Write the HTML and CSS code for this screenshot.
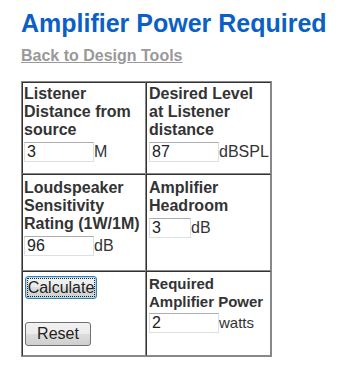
FILE: index.html
```html
<!DOCTYPE html>
<html lang="en">
<head>
  <meta charset="UTF-8" />
  <title>Amplifier Power Required</title>
  <meta name="viewport" content="width=device-width, initial-scale=1.0" />
  <link rel="stylesheet" href="styles.css">
</head>
<body>

<div class="page">
  <h1 class="title">Amplifier Power Required</h1>
  <p class="back"><a href="#">Back to Design Tools</a></p>

  <form id="ampForm">
    <table class="calc">
      <tr class="row-first">
        <td class="left">
          <span class="label">Listener Distance from source</span><br>
          <input type="text" name="distance" value="3" class="field">M
        </td>
        <td class="right">
          <span class="label">Desired Level at Listener distance</span><br>
          <input type="text" name="level" value="87" class="field">dBSPL
        </td>
      </tr>
      <tr class="row-second">
        <td class="left">
          <span class="label">Loudspeaker Sensitivity Rating (1W/1M)</span><br>
          <input type="text" name="sensitivity" value="96" class="field">dB
        </td>
        <td class="right">
          <span class="label">Amplifier Headroom</span><br>
          <input type="text" name="headroom" value="3" class="field short">dB
        </td>
      </tr>
      <tr class="row-third">
        <td class="left">
          <div class="buttons">
            <button type="button" class="btn btn-calc" id="calcBtn">Calculate</button>
            <button type="reset" class="btn btn-reset">Reset</button>
          </div>
        </td>
        <td class="right result">
          <span class="label">Required Amplifier Power</span><br>
          <input type="text" name="power" value="2" class="field">watts
        </td>
      </tr>
    </table>
  </form>
</div>

<script>
  const form = document.getElementById('ampForm');
  document.getElementById('calcBtn').addEventListener('click', () => {
    const d = parseFloat(form.distance.value);
    const lvl = parseFloat(form.level.value);
    const sens = parseFloat(form.sensitivity.value);
    const head = parseFloat(form.headroom.value);
    const db = lvl + head - sens + 20 * Math.log10(d);
    form.power.value = Math.round(Math.pow(10, db / 10));
  });
</script>

</body>
</html>
```

FILE: styles.css
```css
body {
  margin: 0;
  font-family: "Liberation Sans", Arial, sans-serif;
  color: #333;
  background: #fff;
}
.page {
  padding: 9px 0 0 21px;
}
.title {
  margin: 0;
  font-size: 25px;
  line-height: 29px;
  font-weight: bold;
  color: #0b5fc5;
}
.back {
  margin: 9px 0 16px 0;
  font-size: 16px;
  line-height: 18px;
  font-weight: bold;
}
.back a {
  color: #999;
}
form { margin: 0; }
.calc {
  border-collapse: separate;
  border-spacing: 0;
  border: 1px solid #888;
  table-layout: fixed;
  width: 251px;
  font-size: 16px;
}
.calc td {
  border: 1px solid;
  border-color: #333 #888 #888 #333;
  vertical-align: top;
  line-height: 18px;
  padding: 2px 1px;
}
.calc td.left { width: 120px; }
.calc td.right { padding-left: 2px; }
.row-first { height: 92px; }
.row-second { height: 97px; }
.row-second td { padding-top: 4px; }
.row-third { height: 85px; }
.calc td.result {
  font-size: 15px;
  line-height: 17.5px;
  padding-top: 3px;
}
.label {
  font-weight: bold;
}
.field {
  width: 70px;
  height: 20px;
  box-sizing: border-box;
  margin: 3px 0 0 0;
  padding: 0 2px;
  border: 1px solid #dbdfe6;
  border-top-color: #abadb3;
  font-family: "Liberation Sans", Arial, sans-serif;
  font-size: 16px;
  color: #222;
  vertical-align: baseline;
}
.field.short { width: 42px; }
.buttons {
  display: flex;
  flex-direction: column;
  align-items: flex-start;
  gap: 23px;
  padding: 2px 0 0 1px;
}
.btn {
  height: 24px;
  padding: 0;
  border: 1px solid #707070;
  border-radius: 3px;
  background: linear-gradient(#f2f2f2 0%, #ebebeb 50%, #dddddd 50%, #cfcfcf 100%);
  font-family: "Liberation Sans", Arial, sans-serif;
  font-size: 16px;
  color: #222;
  cursor: pointer;
}
.btn-calc {
  width: 72px;
  height: 23px;
  border-color: #3c7fb1;
  box-shadow: inset 0 0 0 1px #a8d8f2;
  outline: 1px dotted #222;
  outline-offset: -3px;
}
.btn-reset {
  width: 66px;
}
```
